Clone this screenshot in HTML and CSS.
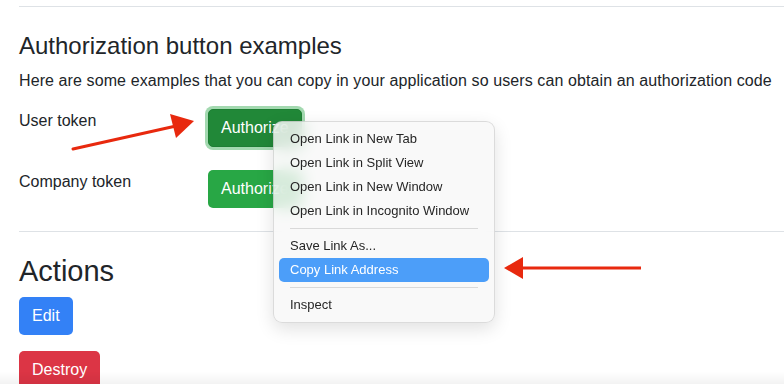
FILE: index.html
```html
<!DOCTYPE html>
<html lang="en">
<head>
  <meta charset="UTF-8">
  <meta name="viewport" content="width=device-width, initial-scale=1.0">
  <title>Authorization</title>
  <link rel="stylesheet" href="styles.css">
</head>
<body>
  <div class="container">
    <hr class="rule">
    <h3 class="section-title">Authorization button examples</h3>
    <p class="intro">Here are some examples that you can copy in your application so users can obtain an authorization code</p>

    <div class="token-row">
      <div class="token-label">User token</div>
      <div><a href="#" class="btn btn-success is-focused">Authorize</a></div>
    </div>
    <div class="token-row">
      <div class="token-label">Company token</div>
      <div><a href="#" class="btn btn-success">Authorize</a></div>
    </div>

    <hr class="rule">
    <h2 class="actions-title">Actions</h2>
    <div class="actions">
      <a href="#" class="btn btn-primary">Edit</a>
      <a href="#" class="btn btn-danger">Destroy</a>
    </div>
  </div>

  <ul class="context-menu">
    <li>Open Link in New Tab</li>
    <li>Open Link in Split View</li>
    <li>Open Link in New Window</li>
    <li>Open Link in Incognito Window</li>
    <li class="separator"></li>
    <li>Save Link As...</li>
    <li class="active">Copy Link Address</li>
    <li class="separator"></li>
    <li>Inspect</li>
  </ul>

  <svg class="arrows" width="784" height="384" viewBox="0 0 784 384">
    <line x1="73" y1="149" x2="176" y2="126" stroke="#e8290e" stroke-width="3" stroke-linecap="round"/>
    <polygon points="194,121 170,114 176,138" fill="#e8290e"/>
    <line x1="641" y1="268" x2="520" y2="268" stroke="#e8290e" stroke-width="3"/>
    <polygon points="504,268 523,257 523,279" fill="#e8290e"/>
  </svg>

  <div class="bottom-fade"></div>
</body>
</html>
```

FILE: styles.css
```css
body {
  margin: 0;
  font-family: "Liberation Sans", Arial, sans-serif;
  font-size: 16px;
  line-height: 1.5;
  color: #212529;
  background: #fff;
  overflow: hidden;
}

.container {
  padding: 6px 0 0 19px;
}

.rule {
  margin: 0;
  border: 0;
  border-top: 1px solid #dee2e6;
}

.section-title {
  margin: 25px 0 8px;
  font-size: 24px;
  font-weight: 500;
  line-height: 1.2;
}

.intro {
  margin: 0 0 16px;
  white-space: nowrap;
  letter-spacing: 0.1px;
}

.token-row {
  display: grid;
  grid-template-columns: 189px auto;
  align-items: start;
  margin-bottom: 23px;
}

.btn {
  display: inline-block;
  padding: 6px 12px;
  border: 1px solid transparent;
  border-radius: 5px;
  color: #fff;
  text-decoration: none;
  line-height: 24px;
}

.btn-success {
  background: #28a745;
}

.btn-success.is-focused {
  background: #218838;
  border-color: #1e7e34;
  box-shadow: 0 0 0 3px rgba(72, 180, 97, 0.5);
}

.btn-primary {
  background: #3381f6;
}

.btn-danger {
  background: #dc3545;
}

.actions-title {
  margin: 22px 0 8px;
  font-size: 29px;
  font-weight: 500;
  line-height: 1.2;
}

.actions {
  display: flex;
  flex-direction: column;
  align-items: flex-start;
  gap: 16px;
}

.context-menu {
  position: absolute;
  left: 273px;
  top: 121px;
  width: 210px;
  margin: 0;
  padding: 5px;
  list-style: none;
  background: rgba(248, 248, 248, 0.82);
  backdrop-filter: blur(8px);
  border: 1px solid rgba(0, 0, 0, 0.12);
  border-radius: 9px;
  box-shadow: 0 6px 18px rgba(0, 0, 0, 0.12);
  font-size: 13px;
  color: #262626;
}

.context-menu li {
  height: 24px;
  line-height: 24px;
  padding: 0 11px;
  border-radius: 5px;
  white-space: nowrap;
}

.context-menu li.active {
  background: #4c9ef9;
  color: #fff;
}

.context-menu li.separator {
  height: 11px;
  padding: 0;
  position: relative;
}

.context-menu li.separator::after {
  content: "";
  position: absolute;
  left: 11px;
  right: 11px;
  top: 5px;
  border-top: 1px solid #d9d9d9;
}

.arrows {
  position: absolute;
  left: 0;
  top: 0;
  pointer-events: none;
}

.bottom-fade {
  position: absolute;
  left: 0;
  right: 0;
  bottom: 0;
  height: 12px;
  background: linear-gradient(rgba(0, 0, 0, 0), rgba(0, 0, 0, 0.05));
}
```
